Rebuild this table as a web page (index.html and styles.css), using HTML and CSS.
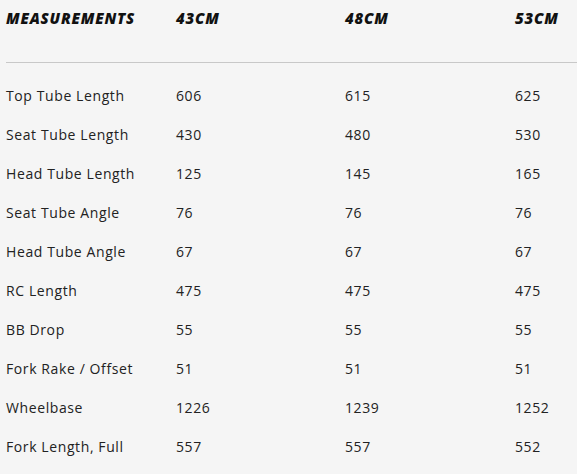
FILE: index.html
```html
<!DOCTYPE html>
<html>
<head>
<meta charset="utf-8">
<link rel="stylesheet" href="styles.css">
</head>
<body>
<div class="table">
  <div class="head">
    <div class="cell">MEASUREMENTS</div>
    <div class="cell">43CM</div>
    <div class="cell">48CM</div>
    <div class="cell">53CM</div>
  </div>
  <div class="rows">
    <div class="row"><div class="cell">Top Tube Length</div><div class="cell">606</div><div class="cell">615</div><div class="cell">625</div></div>
    <div class="row"><div class="cell">Seat Tube Length</div><div class="cell">430</div><div class="cell">480</div><div class="cell">530</div></div>
    <div class="row"><div class="cell">Head Tube Length</div><div class="cell">125</div><div class="cell">145</div><div class="cell">165</div></div>
    <div class="row"><div class="cell">Seat Tube Angle</div><div class="cell">76</div><div class="cell">76</div><div class="cell">76</div></div>
    <div class="row"><div class="cell">Head Tube Angle</div><div class="cell">67</div><div class="cell">67</div><div class="cell">67</div></div>
    <div class="row"><div class="cell">RC Length</div><div class="cell">475</div><div class="cell">475</div><div class="cell">475</div></div>
    <div class="row"><div class="cell">BB Drop</div><div class="cell">55</div><div class="cell">55</div><div class="cell">55</div></div>
    <div class="row"><div class="cell">Fork Rake / Offset</div><div class="cell">51</div><div class="cell">51</div><div class="cell">51</div></div>
    <div class="row"><div class="cell">Wheelbase</div><div class="cell">1226</div><div class="cell">1239</div><div class="cell">1252</div></div>
    <div class="row"><div class="cell">Fork Length, Full</div><div class="cell">557</div><div class="cell">557</div><div class="cell">552</div></div>
  </div>
</div>
</body>
</html>
```
FILE: styles.css
```css
html, body {
  margin: 0;
  padding: 0;
  background: #f5f5f5;
}
body {
  font-family: "Open Sans", "Liberation Sans", sans-serif;
  color: #222;
  width: 577px;
  height: 474px;
  overflow: hidden;
}
.table {
  padding-left: 6px;
}
.head, .row {
  display: grid;
  grid-template-columns: 170px 169px 170px 1fr;
}
.head {
  height: 62px;
  border-bottom: 1px solid #c8c8c8;
  font-weight: 800;
  font-style: italic;
  font-size: 15px;
  letter-spacing: 0.8px;
  color: #111;
  line-height: 36px;
}
.rows {
  padding-top: 13px;
}
.row {
  height: 39px;
  align-items: center;
  font-size: 14px;
  letter-spacing: 0.6px;
}
```
